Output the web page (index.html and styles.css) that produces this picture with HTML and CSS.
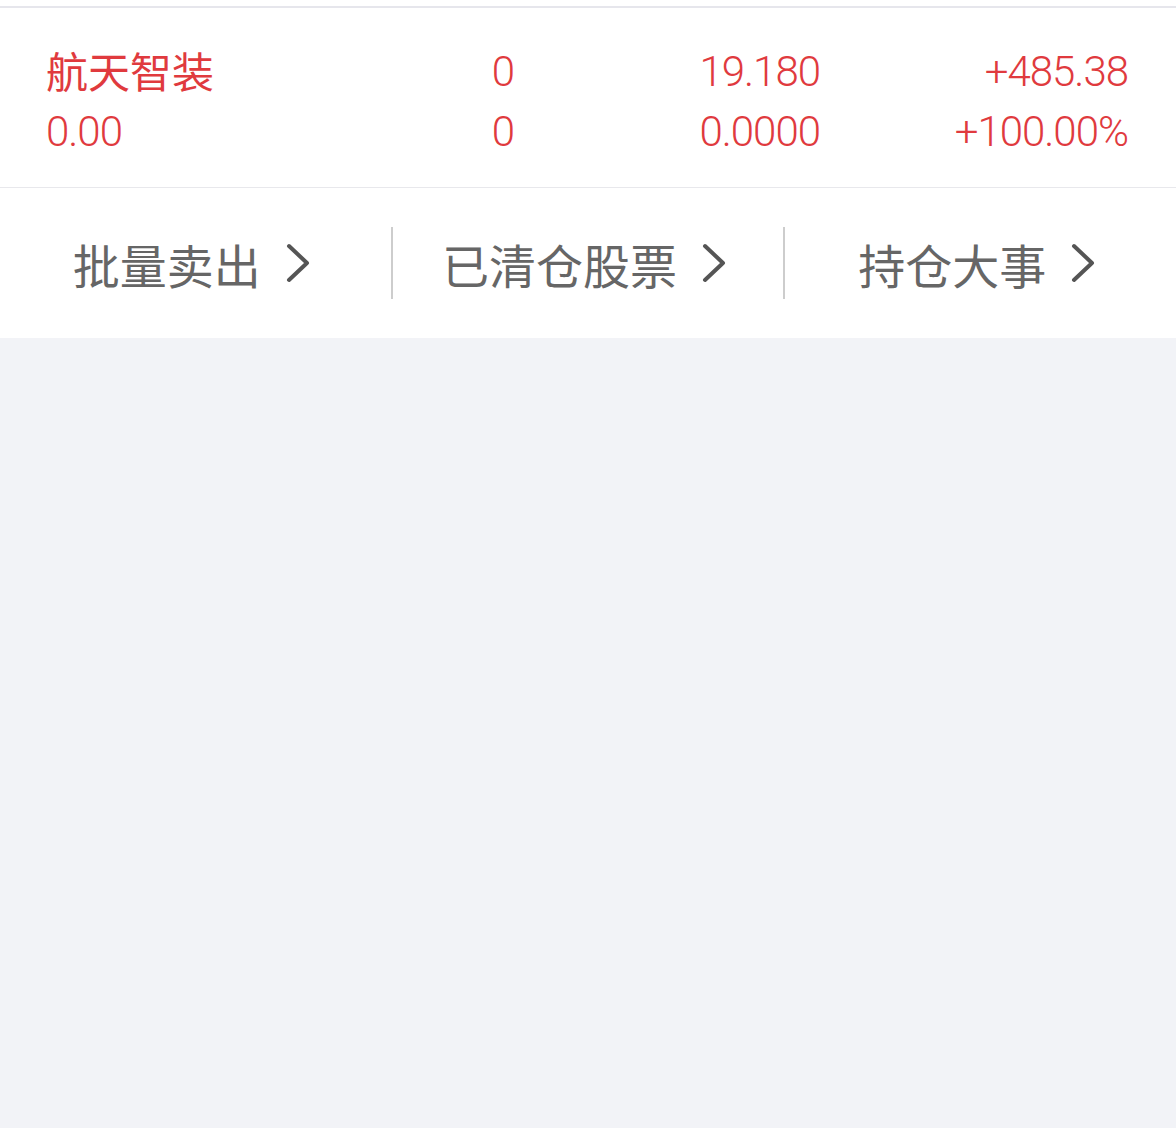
FILE: index.html
```html
<!DOCTYPE html>
<html lang="zh-CN">
	<head>
		<meta charset="UTF-8" />
		<meta name="viewport" content="width=device-width, initial-scale=1.0" />
		<title>持仓</title>
		<link rel="stylesheet" href="styles.css">
	</head>
	<body>
		<div class="top-gap"></div>

		<div class="position">
			<div class="pos-row">
				<span class="col name">航天智装</span>
				<span class="col qty">0</span>
				<span class="col price">19.180</span>
				<span class="col profit">+485.38</span>
			</div>
			<div class="pos-row">
				<span class="col name num">0.00</span>
				<span class="col qty">0</span>
				<span class="col price">0.0000</span>
				<span class="col profit">+100.00%</span>
			</div>
		</div>

		<div class="actions">
			<a class="action" href="#">
				<span>批量卖出</span>
				<svg class="chevron" viewBox="0 0 26 42"><path d="M4 4 L22 21 L4 38" /></svg>
			</a>
			<a class="action" href="#">
				<span>已清仓股票</span>
				<svg class="chevron" viewBox="0 0 26 42"><path d="M4 4 L22 21 L4 38" /></svg>
			</a>
			<a class="action" href="#">
				<span>持仓大事</span>
				<svg class="chevron" viewBox="0 0 26 42"><path d="M4 4 L22 21 L4 38" /></svg>
			</a>
		</div>
	</body>
</html>
```

FILE: styles.css
```css
body {
	margin: 0;
	padding: 0;
	background-color: #f2f3f7;
	font-family: Roboto, "Noto Sans CJK SC", sans-serif;
	min-height: 1128px;
}

.top-gap {
	height: 6px;
	background-color: #fff;
	border-bottom: 2px solid #e6e6ec;
}

.position {
	background-color: #fff;
	padding: 34px 48px 0 46px;
	height: 145px;
	border-bottom: 1px solid #e8e8ec;
}

.pos-row {
	display: grid;
	grid-template-columns: 330px 254px 190px 1fr;
	height: 60px;
	line-height: 60px;
	color: #e03a3e;
	font-size: 42px;
	font-weight: 300;
	letter-spacing: -1px;
}

.pos-row .name {
	font-family: "Noto Sans CJK SC", sans-serif;
	font-weight: 400;
	font-size: 42px;
	line-height: 56px;
	letter-spacing: 0;
}

.pos-row .name.num {
	font-family: Roboto, sans-serif;
	font-weight: 300;
	line-height: 60px;
	letter-spacing: -1px;
}

.qty {
	text-align: center;
}

.price {
	text-align: right;
}

.profit {
	text-align: right;
}

.actions {
	display: flex;
	align-items: center;
	background-color: #fff;
	height: 150px;
}

.action {
	flex: 1;
	display: flex;
	align-items: center;
	justify-content: center;
	gap: 24px;
	height: 72px;
	padding-right: 7px;
	color: #666;
	text-decoration: none;
	font-family: "Noto Sans CJK SC", sans-serif;
	font-size: 47px;
	border-left: 2px solid #cdcdcd;
}

.action:first-child {
	border-left: none;
}

.chevron {
	width: 26px;
	height: 42px;
	fill: none;
	stroke: #555;
	stroke-width: 4;
	stroke-linecap: round;
	stroke-linejoin: round;
}
```
